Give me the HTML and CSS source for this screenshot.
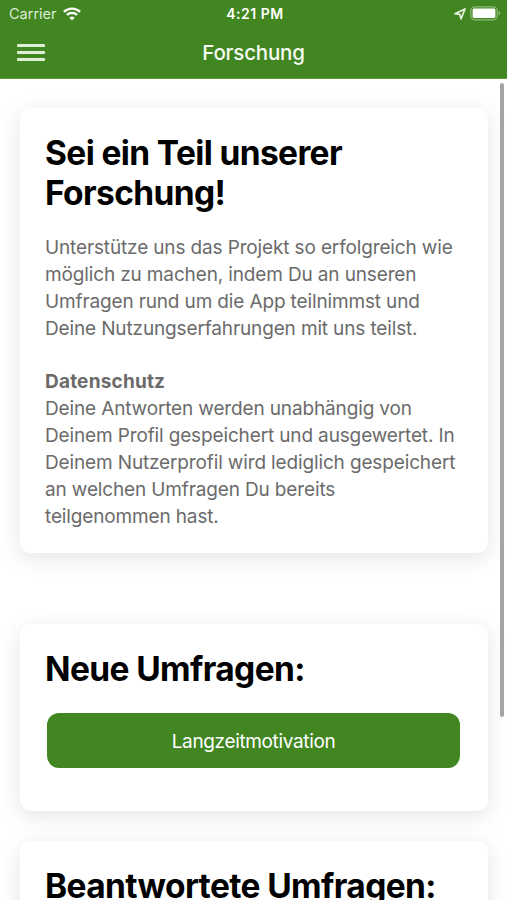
FILE: index.html
```
<!DOCTYPE html>
<html lang="de">
<head>
  <meta charset="UTF-8">
  <meta name="viewport" content="width=device-width, initial-scale=1">
  <title>Forschung</title>
  <link rel="stylesheet" href="styles.css">
</head>
<body>
  <header class="header">
    <div class="statusbar">
      <div class="status-left">
        <span class="carrier">Carrier</span>
        <svg class="wifi" viewBox="0 0 18 14" width="18" height="14">
          <path d="M.9 4.9a11.6 11.6 0 0 1 16.2 0M3.9 7.9a7.3 7.3 0 0 1 10.2 0" fill="none" stroke="#fff" stroke-width="2.3"/>
          <path d="M9 13.6l-2.7-2.9a3.9 3.9 0 0 1 5.4 0z" fill="#fff"/>
        </svg>
      </div>
      <span class="time">4:21 PM</span>
      <div class="status-right">
        <svg class="location" viewBox="0 0 12 12" width="12" height="12">
          <path d="M1 5.7L11 1 7 10.9 5.8 6.4z" fill="none" stroke="#e6f2df" stroke-width="1.7" stroke-linejoin="round"/>
        </svg>
        <svg class="battery" viewBox="0 0 31 15" width="31" height="15">
          <rect x=".8" y=".8" width="26.4" height="13" rx="4" fill="none" stroke="#8db97b" stroke-width="1.2"/>
          <rect x="2.6" y="2.6" width="22.8" height="9.4" rx="1.5" fill="#fff"/>
          <path d="M28.5 5v4.6q1.7-.8 1.7-2.3t-1.7-2.3z" fill="#8db97b"/>
        </svg>
      </div>
    </div>
    <div class="toolbar">
      <div class="menu-button"><span></span><span></span><span></span></div>
      <div class="title">Forschung</div>
    </div>
  </header>

  <main class="content">
    <section class="card card-intro">
      <h1>Sei ein Teil unserer<br>Forschung!</h1>
      <p>
        Unterstütze uns das Projekt so erfolgreich wie<br>
        möglich zu machen, indem Du an unseren<br>
        Umfragen rund um die App teilnimmst und<br>
        Deine Nutzungserfahrungen mit uns teilst.
      </p>
      <p>
        <strong>Datenschutz</strong><br>
        Deine Antworten werden unabhängig von<br>
        Deinem Profil gespeichert und ausgewertet. In<br>
        Deinem Nutzerprofil wird lediglich gespeichert<br>
        an welchen Umfragen Du bereits<br>
        teilgenommen hast.
      </p>
    </section>

    <section class="card card-new">
      <h1>Neue Umfragen:</h1>
      <button class="survey-button">Langzeitmotivation</button>
    </section>

    <section class="card card-done">
      <h1>Beantwortete Umfragen:</h1>
    </section>
  </main>

  <div class="scrollbar"></div>
</body>
</html>
```

FILE: styles.css
```
/* GERAL */
* {
  box-sizing: border-box;
}

body {
  font-family: Inter, "Liberation Sans", sans-serif;
  margin: 0;
  height: 900px;
  overflow: hidden;
  background: #fff;
}

/* HEADER */
.header {
  height: 79px;
  background-color: #418620;
  border-bottom: 1px solid #5f9a43;
  color: #fff;
}

.statusbar {
  display: grid;
  grid-template-columns: 1fr auto 1fr;
  align-items: center;
  height: 27px;
  padding: 0 6px 0 9px;
}

.status-left,
.status-right {
  display: flex;
  align-items: center;
}

.status-left {
  gap: 6px;
}

.status-right {
  justify-content: flex-end;
  gap: 4px;
}

.carrier {
  font-size: 14.5px;
  color: #dcebd5;
}

.time {
  font-size: 14px;
  font-weight: 600;
  letter-spacing: 0.5px;
}

.toolbar {
  display: grid;
  grid-template-columns: 1fr auto 1fr;
  align-items: center;
  height: 51px;
  padding: 0 17px;
}

.menu-button {
  display: flex;
  flex-direction: column;
  gap: 4px;
  width: 28px;
}

.menu-button span {
  height: 3px;
  border-radius: 1px;
  background: #dfeed8;
}

.title {
  font-size: 20.5px;
  font-weight: 500;
  letter-spacing: -0.2px;
  color: #f6faf4;
}

/* CARDS */
.content {
  padding: 29px 19px 0 20px;
}

.card {
  padding: 25px 27px 0 25px;
  border-radius: 11px;
  background: #fff;
  box-shadow: 0 5px 22px rgba(0, 0, 0, 0.11);
  white-space: nowrap;
}

.card-intro {
  height: 445px;
  margin-bottom: 71px;
}

.card-new {
  height: 187px;
  margin-bottom: 30px;
}

.card-done {
  height: 187px;
}

h1 {
  margin: 0;
  font-size: 33.5px;
  line-height: 40px;
  font-weight: 700;
  letter-spacing: -0.62px;
  color: #000;
}

p {
  margin: 22px 0 27px;
  font-size: 19px;
  line-height: 26.85px;
  letter-spacing: -0.14px;
  color: #6b6b6b;
}

p strong {
  letter-spacing: 0.2px;
}

.survey-button {
  display: block;
  width: 413px;
  height: 55px;
  margin: 24px 0 0 2px;
  padding: 2px 0 0;
  border: none;
  border-radius: 12px;
  background-color: #418620;
  color: #fff;
  font-family: inherit;
  font-size: 19px;
  letter-spacing: -0.35px;
}

/* SCROLLBAR */
.scrollbar {
  position: absolute;
  top: 83px;
  right: 3px;
  width: 4px;
  height: 634px;
  border-radius: 2px;
  background: #a4a4a4;
}
```
